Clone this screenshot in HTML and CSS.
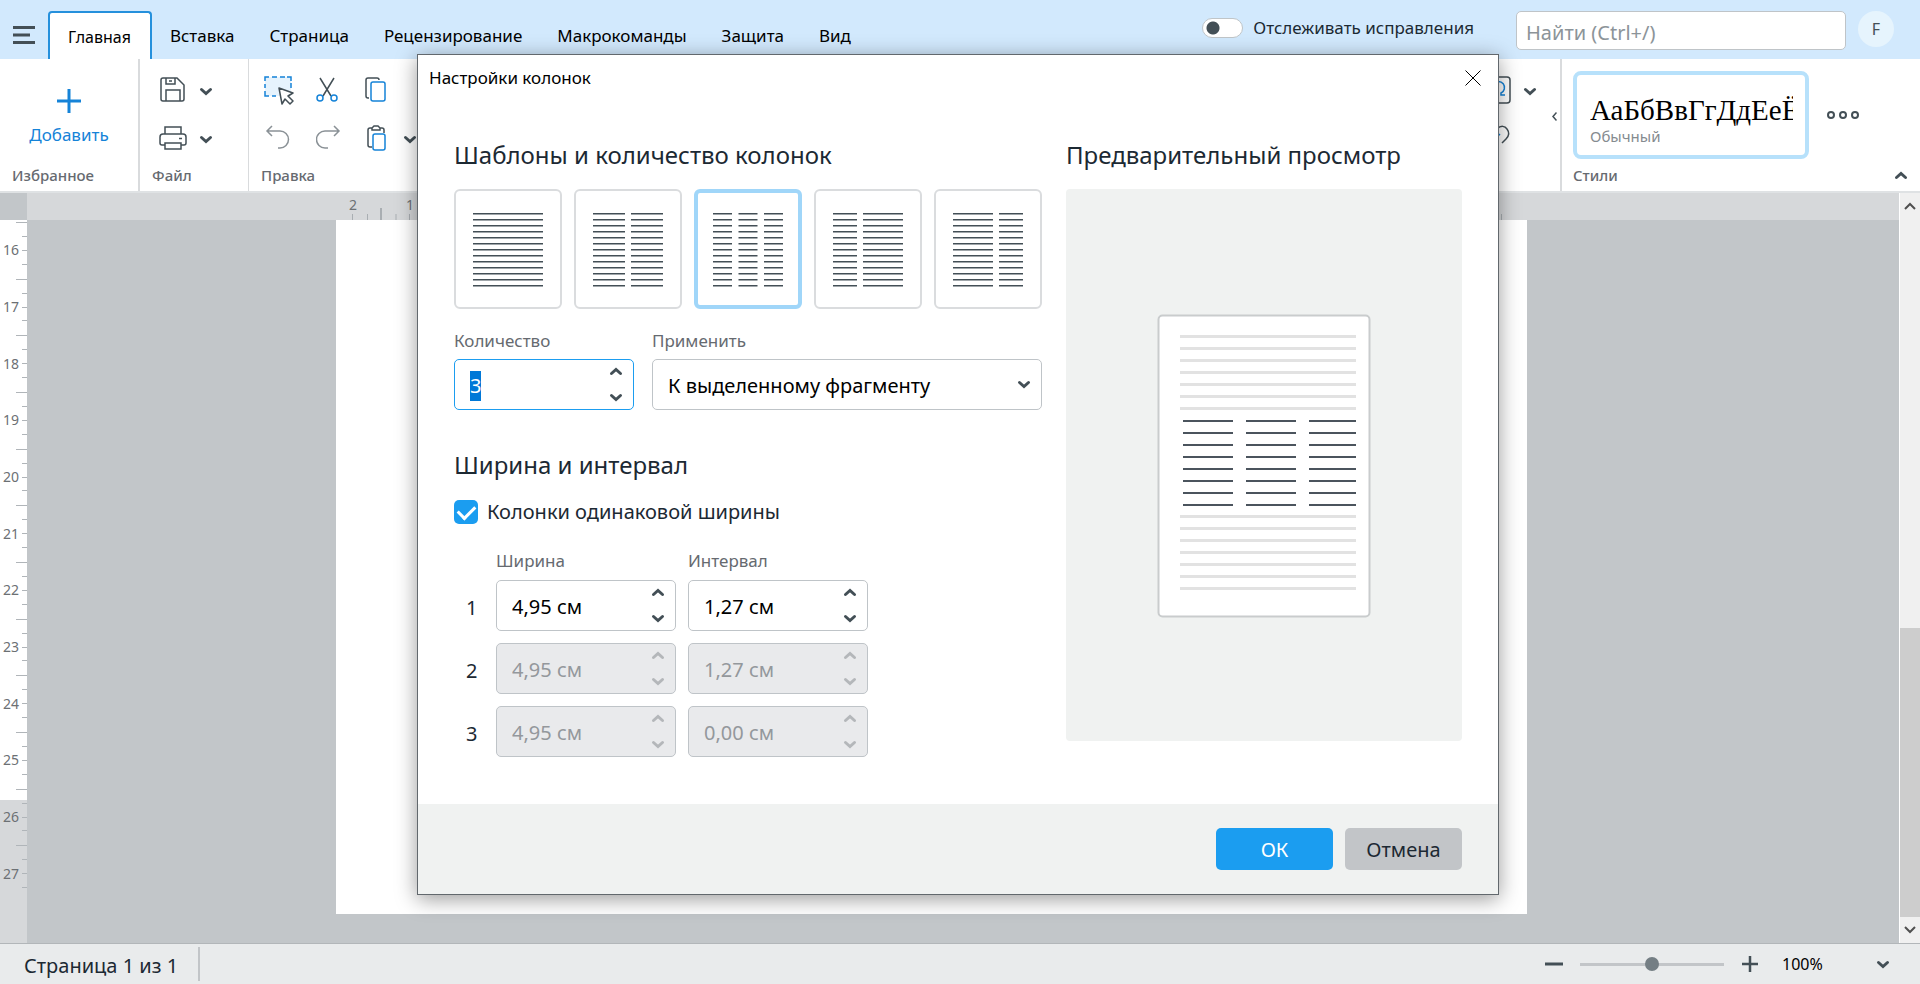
FILE: index.html
```html
<!DOCTYPE html>
<html lang="ru">
<head>
<meta charset="utf-8">
<title>Настройки колонок</title>
<link rel="stylesheet" href="styles.css">
</head>
<body>
<svg class="defs" width="0" height="0" aria-hidden="true">
  <symbol id="down" viewBox="0 0 14 9"><path d="M2.500 2.500 7 6.500l4.500-4" fill="none" stroke="currentColor" stroke-width="3" stroke-linecap="round" stroke-linejoin="miter"/></symbol>
  <symbol id="up" viewBox="0 0 14 9"><path d="M2.500 6.500 7 2.500l4.500 4" fill="none" stroke="currentColor" stroke-width="3" stroke-linecap="round" stroke-linejoin="miter"/></symbol>
</svg>
<div class="app">
  <header class="topbar">
    <button class="menu" aria-label="Меню"><svg width="22" height="18"><path d="M0 1.500h22M0 9h17M0 16.500h22" stroke="#434f56" stroke-width="3"/></svg></button>
    <nav class="tabs">
      <a href="#" class="tab active">Главная</a>
      <a href="#" class="tab">Вставка</a>
      <a href="#" class="tab">Страница</a>
      <a href="#" class="tab">Рецензирование</a>
      <a href="#" class="tab">Макрокоманды</a>
      <a href="#" class="tab">Защита</a>
      <a href="#" class="tab">Вид</a>
    </nav>
    <label class="track"><input type="checkbox" class="switch">Отслеживать исправления</label>
    <input class="search" type="text" placeholder="Найти (Ctrl+/)" aria-label="Найти">
    <button class="avatar">F</button>
  </header>

  <section class="ribbon">
    <div class="group favorites">
      <button class="add">
        <svg width="24" height="24"><path d="M12 0v24M0 12h24" stroke="#1583d8" stroke-width="3"/></svg>
        <span>Добавить</span>
      </button>
      <h3>Избранное</h3>
    </div>
    <div class="group file">
      <div class="tools">
        <button class="tool" aria-label="Сохранить"><svg width="28" height="26" fill="none" stroke="#434f56" stroke-width="1.500"><path d="M5 1h13l7 7v14a2 2 0 0 1-2 2H4a2 2 0 0 1-2-2V3a2 2 0 0 1 2-2zM7 24V13h14v11M7 1v6h9V1"/><path d="M10 4h3"/></svg></button>
        <button class="drop" aria-label="Варианты сохранения"><svg width="14" height="9"><use href="#down"/></svg></button>
        <button class="tool" aria-label="Печать"><svg width="28" height="26" fill="none" stroke="#434f56" stroke-width="1.500"><path d="M6 9V2h16v7M6 20H3a2 2 0 0 1-2-2v-6a3 3 0 0 1 3-3h20a3 3 0 0 1 3 3v6a2 2 0 0 1-2 2h-3M6 18h16v6H6zM20 13.500h3"/></svg></button>
        <button class="drop" aria-label="Варианты печати"><svg width="14" height="9"><use href="#down"/></svg></button>
      </div>
      <h3>Файл</h3>
    </div>
    <div class="group edit">
      <div class="tools">
        <button class="tool" aria-label="Выделить"><svg width="32" height="30" fill="none"><path d="M1 2h26v19H1z" fill="#e6f3fd"/><path d="M1 6V2h4M8 2h5M16 2h5M23 2h4v4M27 8v5M1 9v4M1 16v5h4M8 21h4" stroke="#1583d8" stroke-width="1.500"/><path d="m15 13 14 5-5 3 5 5-3 3-5-5-3 5z" fill="#fff" stroke="#434f56" stroke-width="1.500" stroke-linejoin="round"/></svg></button>
        <button class="tool" aria-label="Вырезать"><svg width="22" height="26" fill="none" stroke-width="1.500"><path d="m4 1 11 18M18 1 7 19" stroke="#434f56"/><circle cx="4" cy="21" r="3" stroke="#1583d8"/><circle cx="18" cy="21" r="3" stroke="#1583d8"/></svg></button>
        <button class="tool" aria-label="Копировать"><svg width="22" height="26" fill="none" stroke-width="1.500"><path d="M4 21H3a2 2 0 0 1-2-2V3a2 2 0 0 1 2-2h9a2 2 0 0 1 2 2" stroke="#434f56"/><rect x="6" y="5" width="14" height="19" rx="2" stroke="#1583d8"/></svg></button>
        <span></span>
        <button class="tool" aria-label="Отменить"><svg width="26" height="26" fill="none" stroke="#8a9196" stroke-width="1.500"><path d="M8 1 3 6l5 5M3 6h13a8.500 8.500 0 0 1 0 17h-2"/></svg></button>
        <button class="tool" aria-label="Повторить"><svg width="26" height="26" fill="none" stroke="#8a9196" stroke-width="1.500"><path d="m18 1 5 5-5 5M23 6H9a8.500 8.500 0 0 0 0 17h3"/></svg></button>
        <button class="tool" aria-label="Вставить"><svg width="22" height="26" fill="none" stroke-width="1.500"><path d="M7 22H5a2 2 0 0 1-2-2V5a2 2 0 0 1 2-2h2M15 3h2a2 2 0 0 1 2 2v3M7 5V3l2-2h4l2 2v2z" stroke="#434f56"/><rect x="8" y="9" width="12" height="16" rx="2" fill="#fff" stroke="#1583d8"/></svg></button>
        <button class="drop" aria-label="Варианты вставки"><svg width="14" height="9"><use href="#down"/></svg></button>
      </div>
      <h3>Правка</h3>
    </div>
    <div class="group insert">
      <div class="tools">
        <button class="tool" aria-label="Символ"><svg width="28" height="28" fill="none" stroke-width="1.500"><rect x="1" y="1" width="25" height="26" rx="3" stroke="#434f56"/><path d="M8 19h4v-2a6 6 0 1 1 5 0v2h4" stroke="#1583d8"/></svg></button>
        <button class="drop" aria-label="Другие символы"><svg width="14" height="9"><use href="#down"/></svg></button>
        <button class="tool" aria-label="Ссылка"><svg width="28" height="26" fill="none" stroke-width="1.500"><path d="M13 4c4-4 8-3 10 0 3 4 2 7-1 10l-4 4M14 20l-3 3" stroke="#434f56"/><path d="m10 15 6-6" stroke="#1583d8"/></svg></button>
      </div>
      <button class="collapse" aria-label="Назад"><svg width="5" height="9" fill="none" stroke="#434f56" stroke-width="1.500"><path d="M4.500.5 1 4.500l3.500 4"/></svg></button>
    </div>
    <div class="group styles">
      <div class="gallery">
        <button class="style"><span class="sample">АаБбВвГгДдЕеЁ</span><span class="name">Обычный</span></button>
        <button class="more" aria-label="Ещё"><svg width="34" height="10" fill="none" stroke="#434f56" stroke-width="2"><circle cx="5" cy="5" r="3"/><circle cx="17" cy="5" r="3"/><circle cx="29" cy="5" r="3"/></svg></button>
      </div>
      <div class="caption"><h3>Стили</h3><button class="drop" aria-label="Свернуть"><svg width="14" height="9"><use href="#up"/></svg></button></div>
    </div>
  </section>

  <main class="workspace">
    <div class="corner"></div>
    <div class="hruler">
      <svg width="1500" height="27"><g stroke="#a9aeb2"><path d="M325.500 21v6M340.500 21v6M369 21v6M382.500 21v6M1474.500 21v6"/><path d="M354 15v12" stroke-width="2"/></g><g class="ruler-text"><text x="326" y="17" text-anchor="middle">2</text><text x="383" y="17" text-anchor="middle">1</text></g></svg>
    </div>
    <ol class="vruler">
      <li>16</li><li>17</li><li>18</li><li>19</li><li>20</li><li>21</li><li>22</li><li>23</li><li>24</li><li>25</li><li>26</li><li>27</li>
    </ol>
    <div class="canvas"><div class="sheet"></div></div>
    <div class="scrollbar">
      <button aria-label="Вверх"><svg width="12" height="8" fill="none" stroke="#505050" stroke-width="2"><path d="m1 7 5-5 5 5"/></svg></button>
      <div class="thumb"></div>
      <button aria-label="Вниз"><svg width="12" height="8" fill="none" stroke="#505050" stroke-width="2"><path d="m1 1 5 5 5-5"/></svg></button>
    </div>
  </main>

  <footer class="status">
    <span class="pages">Страница 1 из 1</span>
    <div class="zoom">
      <button aria-label="Уменьшить"><svg width="18" height="18"><path d="M0 9h18" stroke="#434f56" stroke-width="3"/></svg></button>
      <input type="range" aria-label="Масштаб" min="0" max="100" value="50">
      <button aria-label="Увеличить"><svg width="18" height="18"><path d="M1 9h16M9 1v16" stroke="#434f56" stroke-width="2.500"/></svg></button>
      <span class="percent">100%</span>
      <button class="drop" aria-label="Выбрать масштаб"><svg width="14" height="9"><use href="#down"/></svg></button>
    </div>
  </footer>
</div>

<div class="dialog" role="dialog" aria-labelledby="dialog-title">
  <div class="titlebar">
    <h1 id="dialog-title">Настройки колонок</h1>
    <button aria-label="Закрыть"><svg width="16" height="16" stroke="#000"><path d="m.5.5 15 15M15.500.5l-15 15"/></svg></button>
  </div>
  <div class="content">
    <div class="settings">
      <h2>Шаблоны и количество колонок</h2>
      <div class="templates">
        <button class="template" aria-label="Одна колонка"><svg width="70" height="75" stroke-dasharray="1.500 4.500"><path d="M35 0v75" stroke-width="70"/></svg></button>
        <button class="template" aria-label="Две колонки"><svg width="70" height="75" stroke-dasharray="1.500 4.500"><path d="M16 0v75M54 0v75" stroke-width="32"/></svg></button>
        <button class="template selected" aria-label="Три колонки"><svg width="70" height="75" stroke-dasharray="1.500 4.500"><path d="M9.500 0v75M35 0v75M60.500 0v75" stroke-width="19"/></svg></button>
        <button class="template" aria-label="Узкая слева"><svg width="70" height="75" stroke-dasharray="1.500 4.500"><path d="M12 0v75" stroke-width="24"/><path d="M50 0v75" stroke-width="40"/></svg></button>
        <button class="template" aria-label="Узкая справа"><svg width="70" height="75" stroke-dasharray="1.500 4.500"><path d="M20 0v75" stroke-width="40"/><path d="M58 0v75" stroke-width="24"/></svg></button>
      </div>
      <div class="fields">
        <div class="field">
          <label for="count">Количество</label>
          <div class="spin focused"><input id="count" type="text" value="3"><span class="arrows"><button aria-label="Больше"><svg width="14" height="9"><use href="#up"/></svg></button><button aria-label="Меньше"><svg width="14" height="9"><use href="#down"/></svg></button></span></div>
        </div>
        <div class="field wide">
          <label for="scope">Применить</label>
          <div class="select"><select id="scope"><option>К выделенному фрагменту</option></select><svg width="14" height="9"><use href="#down"/></svg></div>
        </div>
      </div>
      <h2>Ширина и интервал</h2>
      <label class="check"><input type="checkbox" checked>Колонки одинаковой ширины</label>
      <div class="sizes">
        <span></span><span class="head">Ширина</span><span class="head">Интервал</span>
        <span class="num">1</span>
        <div class="spin"><input type="text" value="4,95 см" aria-label="Ширина 1"><span class="arrows"><button aria-label="Больше"><svg width="14" height="9"><use href="#up"/></svg></button><button aria-label="Меньше"><svg width="14" height="9"><use href="#down"/></svg></button></span></div>
        <div class="spin"><input type="text" value="1,27 см" aria-label="Интервал 1"><span class="arrows"><button aria-label="Больше"><svg width="14" height="9"><use href="#up"/></svg></button><button aria-label="Меньше"><svg width="14" height="9"><use href="#down"/></svg></button></span></div>
        <span class="num">2</span>
        <div class="spin off"><input type="text" value="4,95 см" aria-label="Ширина 2" disabled><span class="arrows"><button aria-label="Больше" disabled><svg width="14" height="9"><use href="#up"/></svg></button><button aria-label="Меньше" disabled><svg width="14" height="9"><use href="#down"/></svg></button></span></div>
        <div class="spin off"><input type="text" value="1,27 см" aria-label="Интервал 2" disabled><span class="arrows"><button aria-label="Больше" disabled><svg width="14" height="9"><use href="#up"/></svg></button><button aria-label="Меньше" disabled><svg width="14" height="9"><use href="#down"/></svg></button></span></div>
        <span class="num">3</span>
        <div class="spin off"><input type="text" value="4,95 см" aria-label="Ширина 3" disabled><span class="arrows"><button aria-label="Больше" disabled><svg width="14" height="9"><use href="#up"/></svg></button><button aria-label="Меньше" disabled><svg width="14" height="9"><use href="#down"/></svg></button></span></div>
        <div class="spin off"><input type="text" value="0,00 см" aria-label="Интервал 3" disabled><span class="arrows"><button aria-label="Больше" disabled><svg width="14" height="9"><use href="#up"/></svg></button><button aria-label="Меньше" disabled><svg width="14" height="9"><use href="#down"/></svg></button></span></div>
      </div>
    </div>
    <div class="preview">
      <h2>Предварительный просмотр</h2>
      <div class="stage">
        <svg width="214" height="304" fill="none">
          <rect x="1.500" y="1.500" width="211" height="301" rx="4" fill="#fff" stroke="#c9cccd" stroke-width="2"/>
          <path d="M111 21v75M111 201v75" stroke="#e2e2e2" stroke-width="176" stroke-dasharray="3 9"/>
          <path d="M51 106v86M114 106v86" stroke="#4b545d" stroke-width="50" stroke-dasharray="2 10"/>
          <path d="M175.500 106v86" stroke="#4b545d" stroke-width="47" stroke-dasharray="2 10"/>
        </svg>
      </div>
    </div>
  </div>
  <div class="actions"><button class="ok">ОК</button><button class="cancel">Отмена</button></div>
</div>
<script src="app.js"></script>
</body>
</html>
```
FILE: styles.css
```css
* { box-sizing: border-box; }
body { margin: 0; font: 16px/20px "Noto Sans", "Open Sans", sans-serif; color: #1c2933; }
button { border: 0; padding: 0; background: none; font: inherit; color: inherit; }
h1, h2, h3, ol { margin: 0; padding: 0; font-weight: 400; }
svg { display: block; flex: none; }
.defs { position: absolute; }
.app { display: flex; flex-direction: column; height: 100vh; overflow: hidden; }

.topbar { display: flex; align-items: flex-start; height: 59px; padding-right: 26px; background: #d2e9fd; }
.menu { margin: 26px 13px 0; }
.tabs { display: flex; flex: 1; gap: 1px; padding-top: 11px; }
.tab { height: 48px; padding: 15px 17px 0; color: #000; font-size: 17px; text-decoration: none; white-space: nowrap; }
.tab.active { border: 2px solid #2590dc; border-bottom: 0; border-radius: 4px 4px 0 0; background: #fff; padding: 14px 19px 0 18px; font-size: 16px; }
.track { display: flex; align-items: center; gap: 10px; height: 24px; margin: 16px 42px 0 0; font-size: 17px; }
.switch { appearance: none; width: 41px; height: 20px; margin: 0; border: 1px solid #c0c5c8; border-radius: 10px; background: radial-gradient(circle at 10px 9px, #434f56 6px, #fff 7px); }
.search { width: 330px; height: 39px; margin: 11px 12px 0 0; padding: 4px 9px 0; border: 1px solid #bfc4c8; border-radius: 5px; background: #fff; font: 20px/28px "Noto Sans", sans-serif; }
.search::placeholder { color: #8c9499; opacity: 1; }
.avatar { width: 36px; height: 36px; margin-top: 11px; border-radius: 50%; background: #e6f4fd; color: #434f56; }

.ribbon { display: flex; height: 134px; border-bottom: 2px solid #dfe2e4; background: #fff; }
.group { display: flex; flex-direction: column; justify-content: space-between; padding: 16px 12px 5px; border-right: 2px solid #d9dbdd; }
.group h3 { font-size: 15px; font-weight: 500; line-height: 22px; color: #666a70; }
.favorites { width: 140px; }
.add { display: flex; flex-direction: column; align-items: center; gap: 11px; padding-top: 14px; color: #1583d8; font-size: 17px; line-height: 22px; }
.tools { display: grid; align-items: center; }
.file { width: 109px; border-right-width: 1px; }
.file .tools { grid-template: 30px 30px / 40px 14px; row-gap: 18px; padding-left: 7px; }
.tool, .drop { color: #434f56; }
.tools .drop { padding-top: 2px; }
.edit { width: 168px; flex: 1; border-right: 0; }
.edit .tools { grid-template: 30px 30px / 52px 49px 38px 14px; row-gap: 18px; padding-left: 3px; }
.insert { flex-direction: row; width: 94px; padding: 16px 3px 6px 16px; }
.insert .tools { grid-template: 30px 30px / 39px 14px; row-gap: 18px; align-content: start; }
.collapse { height: 82px; }
.styles { flex: none; width: 358px; border: 0; padding-top: 12px; padding-left: 11px; }
.gallery { display: flex; align-items: center; gap: 17px; }
.style { width: 236px; height: 88px; padding: 4px 12px 0 13px; border: 4px solid #b7e1fb; border-radius: 8px; text-align: left; }
.sample { display: block; overflow: hidden; font: 29px/38px "Liberation Serif", serif; color: #000; white-space: nowrap; }
.name { display: block; font-size: 15px; line-height: 14px; color: #858b90; }
.caption { display: flex; justify-content: space-between; align-items: center; }

.workspace { flex: 1; display: grid; grid-template: 27px 1fr / 27px 1fr 21px; min-height: 0; background: #c2c6c9; }
.hruler { background: #d6d8da; overflow: hidden; }
.ruler-text { font: 14px "Noto Sans", sans-serif; fill: #6c7074; }
.vruler { grid-row: 2; grid-column: 1; display: flex; flex-direction: column; height: 100%; padding: 2px 0 41px; list-style: none; background: linear-gradient(#fff 580px, #d6d8da 580px); font-size: 14px; color: #6c7074; }
.vruler li { flex: 1; display: flex; align-items: center; padding-left: 3px; background: linear-gradient(#b0b5b9, #b0b5b9) right 0 / 11px 1px, linear-gradient(#b0b5b9, #b0b5b9) right 25% / 5px 1px, linear-gradient(#b0b5b9, #b0b5b9) right 50% / 5px 1px, linear-gradient(#b0b5b9, #b0b5b9) right 75% / 5px 1px; background-repeat: no-repeat; }
.canvas { grid-row: 2; grid-column: 2; padding: 0 372px 29px 309px; }
.sheet { height: 100%; background: #fff; }
.scrollbar { grid-row: 1 / 3; grid-column: 3; display: flex; flex-direction: column; border-left: 1px solid #fff; background: #f0f0f0; }
.scrollbar button { display: grid; place-items: center; height: 26px; }
.thumb { height: 289px; margin-top: auto; background: #cdcdcd; }

.status { display: flex; justify-content: space-between; height: 41px; padding: 3px 30px 3px 24px; border-top: 1px solid #b2b6b9; background: #e9ebec; }
.pages { padding: 7px 20px 0 0; border-right: 2px solid #c2c5c8; font-size: 20px; line-height: 24px; }
.zoom { display: flex; align-items: center; gap: 17px; }
.zoom input { appearance: none; width: 144px; height: 14px; margin: 0; background: linear-gradient(#c2c5c8, #c2c5c8) center / 100% 3px no-repeat; }
.zoom input::-webkit-slider-thumb { appearance: none; width: 14px; height: 14px; border-radius: 50%; background: #747e84; }
.percent { width: 77px; margin-left: 6px; color: #000; }

.dialog { position: absolute; top: 54px; left: 417px; width: 1082px; border: 1px solid #62686d; background: #fff; box-shadow: 0 4px 20px rgba(0, 0, 0, .4); }
.titlebar { display: flex; justify-content: space-between; align-items: center; padding: 13px 17px 0 11px; color: #000; }
.titlebar h1 { font-size: 17px; line-height: 20px; }
.content { display: flex; gap: 24px; padding: 50px 36px 47px; }
.settings { width: 588px; }
.preview { flex: 1; }
h2 { font-size: 24px; line-height: 34px; }
.templates { display: grid; grid-template-columns: repeat(5, 1fr); gap: 12px; margin-top: 17px; }
.template { display: grid; place-items: center; height: 120px; padding-top: 2px; border: 2px solid #dadcde; border-radius: 6px; }
.template.selected { border: 4px solid #a0d6f9; }
.template svg { stroke: #434f56; }
.fields { display: flex; gap: 18px; margin: 20px 0 38px; }
.field { width: 180px; }
.field.wide { width: auto; flex: 1; }
.field label, .head { display: block; font-size: 17px; line-height: 24px; color: #666a70; }
.field label { margin-bottom: 6px; }
.spin { display: flex; height: 51px; padding-right: 10px; border: 1px solid #bfc4c8; border-radius: 5px; background: #fff; color: #434f56; }
.spin.focused { border-color: #1b9df0; }
.spin input { flex: 1; min-width: 0; border: 0; outline: 0; padding: 3px 0 0 15px; background: none; font: 20px/30px "Noto Sans", sans-serif; color: #000; }
.spin input::selection { background: #0078d7; color: #fff; }
.arrows { display: flex; flex-direction: column; justify-content: center; gap: 17px; }
.spin.off { background: #e9eaec; color: #b4b7ba; }
.spin.off input { color: #94989c; }
.select { position: relative; }
.select select { appearance: none; width: 100%; height: 51px; padding: 3px 15px 0; border: 1px solid #bfc4c8; border-radius: 5px; background: #fff; font: 20px/30px "Noto Sans", sans-serif; color: #000; }
.select svg { position: absolute; right: 11px; top: 21px; color: #434f56; }
.check { display: flex; align-items: center; gap: 9px; margin-top: 16px; font-size: 20px; line-height: 28px; }
.check input { appearance: none; width: 24px; height: 24px; margin: 0; border-radius: 5px; background: #1b9df0; display: grid; place-items: center; }
.check input::before { content: ""; width: 14px; height: 8px; border: solid #fff; border-width: 0 0 3px 3px; transform: translateY(-2px) rotate(-45deg); }
.sizes { display: grid; grid-template-columns: 30px 180px 180px; gap: 12px; margin-top: 23px; }
.head { margin-bottom: -5px; }
.num { padding: 14px 0 0 12px; font-size: 20px; line-height: 28px; }
.stage { display: grid; place-items: center; height: 552px; margin-top: 17px; padding-top: 2px; border-radius: 4px; background: #f0f2f1; }
.actions { display: flex; justify-content: flex-end; gap: 12px; padding: 24px 36px; background: #f0f2f1; }
.actions button { width: 117px; height: 42px; padding-top: 2px; border-radius: 5px; font-size: 20px; line-height: 28px; background: #c2c5c8; }
.actions .ok { background: #1b9df0; color: #fff; }
```
FILE: app.js
```js
const count = document.getElementById("count");
count.focus();
count.select();
```
